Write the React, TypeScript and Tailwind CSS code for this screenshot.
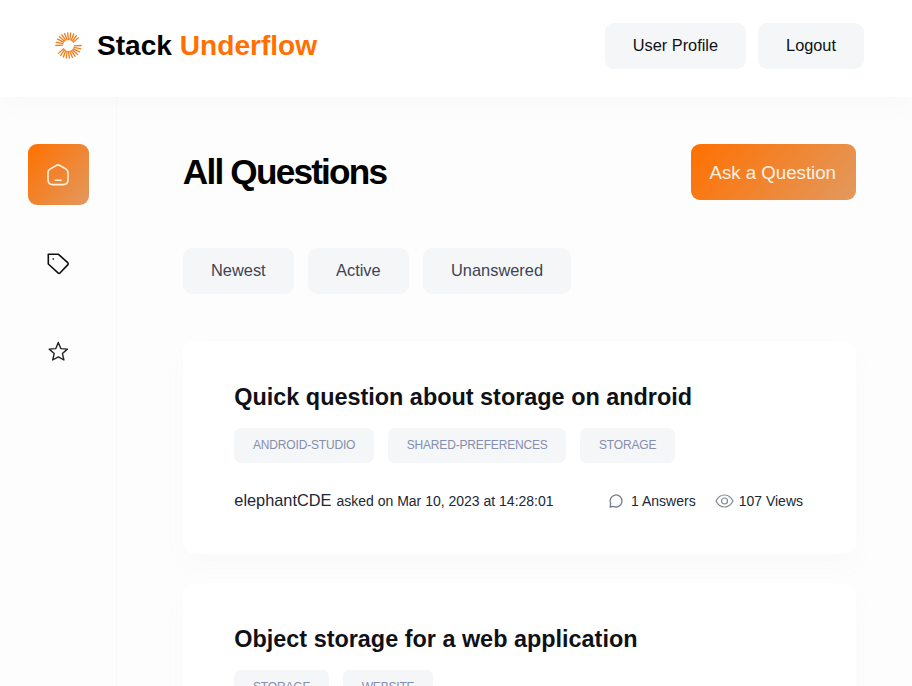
import React from "react";

const upperRays = [180, 195, 210, 224, 238, 252, 266, 280, 294, 308, 322];
const lowerRays = upperRays.map((angle) => angle - 180);

function BurstLogo() {
  return (
    <svg width="28" height="28" viewBox="-14.5 -13.5 28 28" stroke="#f07c1c" strokeWidth="1.3" aria-hidden="true">
      {[...upperRays, ...lowerRays].map((angle) => {
        const r = (angle * Math.PI) / 180;
        return (
          <line
            key={angle}
            x1={5.4 * Math.cos(r + 0.08)}
            y1={5.4 * Math.sin(r + 0.08)}
            x2={13.2 * Math.cos(r)}
            y2={13.2 * Math.sin(r)}
          />
        );
      })}
    </svg>
  );
}

function HomeIcon() {
  return (
    <svg width="24" height="24" viewBox="0 0 24 24" fill="none" stroke="#fff1dc" strokeWidth="1.6" strokeLinecap="round" strokeLinejoin="round">
      <path d="M10.8 2.2a2.6 2.6 0 0 1 2.6 0l6.7 3.9c1.2.8 1.9 1.800 1.900 3.300v7.100c0 3.200-1.400 5.100-4.700 5.100H6.700C3.400 21.600 2 19.700 2 16.500V9.400c0-1.500.7-2.500 1.900-3.300z" />
      <path d="M9.2 17.300h6" />
    </svg>
  );
}

function TagIcon() {
  return (
    <svg width="24" height="24" viewBox="0 0 24 24" fill="none" stroke="#111" strokeWidth="1.6" strokeLinejoin="round">
      <path d="M2.3 2.300h10.200l9.200 8.400q1 1.100 0 2.200l-7.500 7.900q-1.100 1-2.200 0L2.300 12z" />
      <circle cx="7.3" cy="7" r=".9" fill="#444" stroke="none" />
    </svg>
  );
}

function StarIcon() {
  return (
    <svg width="24" height="24" viewBox="0 0 24 24" fill="none" stroke="#222" strokeWidth="1.4" strokeLinejoin="round">
      <path d="M12.3 2.500l2.500 6.100 6.600.5-5 4.350 1.500 6.550-5.600-3.100L6.700 20l1.500-6.550-5-4.350 6.600-.5z" />
    </svg>
  );
}

function ChatIcon() {
  return (
    <svg width="16" height="16" viewBox="0 0 16 16" fill="none" stroke="#71808e" strokeWidth="1.3" strokeLinejoin="round">
      <path d="M2.700 10.700A6 6 0 1 1 5.300 13.300L2.100 14z" />
    </svg>
  );
}

function EyeIcon() {
  return (
    <svg width="19" height="16" viewBox="0 0 19 16" fill="none" stroke="#7f8993" strokeWidth="1.2">
      <path d="M1 8C3 4 6 2 9.500 2S16 4 18 8c-2 4-5 6-8.500 6S3 12 1 8z" />
      <circle cx="9.5" cy="8" r="3" />
    </svg>
  );
}

interface Question {
  title: string;
  tags: string[];
  author: string;
  asked: string;
  answers: string;
  views: string;
}

const questions: Question[] = [
  {
    title: "Quick question about storage on android",
    tags: ["ANDROID-STUDIO", "SHARED-PREFERENCES", "STORAGE"],
    author: "elephantCDE",
    asked: "asked on Mar 10, 2023 at 14:28:01",
    answers: "1 Answers",
    views: "107 Views",
  },
  {
    title: "Object storage for a web application",
    tags: ["STORAGE", "WEBSITE"],
    author: "",
    asked: "",
    answers: "",
    views: "",
  },
];

function QuestionCard({ q }: { q: Question }) {
  return (
    <article className="h-[213px] shrink-0 rounded-[12px] bg-white pr-[52.5px] pl-[51.5px] pt-[41px] shadow-[0_12px_20px_rgba(184,184,184,0.04)]">
      <h3 className="text-[23.42px] leading-[30px] font-bold whitespace-nowrap text-[#0f1117]">{q.title}</h3>
      <div className="mt-[16px] flex gap-[14px]">
        {q.tags.map((tag) => (
          <span key={tag} className="flex h-[34.5px] items-center rounded-[7px] bg-[#f4f6f8] px-[18.7px] text-[12px] tracking-[-0.17px] text-[#858ead]">
            {tag}
          </span>
        ))}
      </div>
      {q.author && (
        <div className="mt-[27.5px] flex h-[20px] items-center justify-between whitespace-nowrap text-[#212734]">
          <div className="flex items-baseline gap-[5px] text-[14px]">
            <span className="text-[16.33px]">{q.author}</span>
            <span>{q.asked}</span>
          </div>
          <div className="flex items-center gap-[19px] pt-[2px] text-[14px]">
            <span className="flex items-center gap-[7px]"><ChatIcon />{q.answers}</span>
            <span className="flex items-center gap-[5px]"><EyeIcon />{q.views}</span>
          </div>
        </div>
      )}
    </article>
  );
}

export default function App() {
  return (
    <div className="flex h-[686px] w-[912px] flex-col overflow-hidden bg-[#fdfdfd] font-['Liberation_Sans',Arial,sans-serif]">
      <header className="relative flex h-[97px] shrink-0 items-start justify-between bg-white pr-[48px] pl-[54px] shadow-[0_10px_20px_rgba(218,213,213,0.1)]">
        <a className="mt-[28px] flex items-center gap-[15px] text-[28.1px] leading-[35px] font-bold text-black">
          <BurstLogo />
          <span>Stack <span className="text-[#ff7000]">Underflow</span></span>
        </a>
        <div className="mt-[22.5px] flex gap-[12px] text-[16.33px] text-[#0f1117]">
          <button className="h-[46.5px] rounded-[9px] bg-[#f4f6f8] px-[28px] pb-[2px]">User Profile</button>
          <button className="h-[46.5px] rounded-[9px] bg-[#f4f6f8] px-[28px] pb-[2px]">Logout</button>
        </div>
      </header>
      <div className="flex min-h-0 flex-1">
        <aside className="flex w-[117px] shrink-0 flex-col items-center border-r border-[#f9f9f9] pt-[47px]">
          <a className="flex size-[61px] items-center justify-center rounded-[9px] bg-[linear-gradient(129deg,#ff7000_0%,#e2995f_100%)]">
            <HomeIcon />
          </a>
          <a className="mt-[47px] flex h-6">
            <TagIcon />
          </a>
          <a className="mt-[64px] flex h-6">
            <StarIcon />
          </a>
        </aside>
        <main className="flex min-w-0 flex-1 flex-col pt-[47px] pr-[56.5px] pl-[65.8px]">
          <div className="flex h-[56px] shrink-0 items-center justify-between">
            <h1 className="text-[35.2px] font-bold tracking-[-0.051em] text-black">All Questions</h1>
            <button className="h-[56px] rounded-[9px] bg-[linear-gradient(129deg,#ff7000_0%,#e2995f_100%)] pr-[19.5px] pl-[18.5px] pt-[1px] text-[18.67px] text-[#fff1e6]">
              Ask a Question
            </button>
          </div>
          <nav className="mt-[47.5px] flex shrink-0 gap-[14px] text-[16.4px] text-[#3f4354]">
            <button className="h-[46.5px] rounded-[9px] bg-[#f4f6f8] px-[28.2px] pb-[1px]">Newest</button>
            <button className="h-[46.5px] rounded-[9px] bg-[#f4f6f8] px-[28.2px] pb-[1px]">Active</button>
            <button className="h-[46.5px] rounded-[9px] bg-[#f4f6f8] px-[28.2px] pb-[1px]">Unanswered</button>
          </nav>
          <section className="mt-[47px] flex flex-col gap-[29px]">
            {questions.map((q) => (
              <QuestionCard key={q.title} q={q} />
            ))}
          </section>
        </main>
      </div>
    </div>
  );
}
